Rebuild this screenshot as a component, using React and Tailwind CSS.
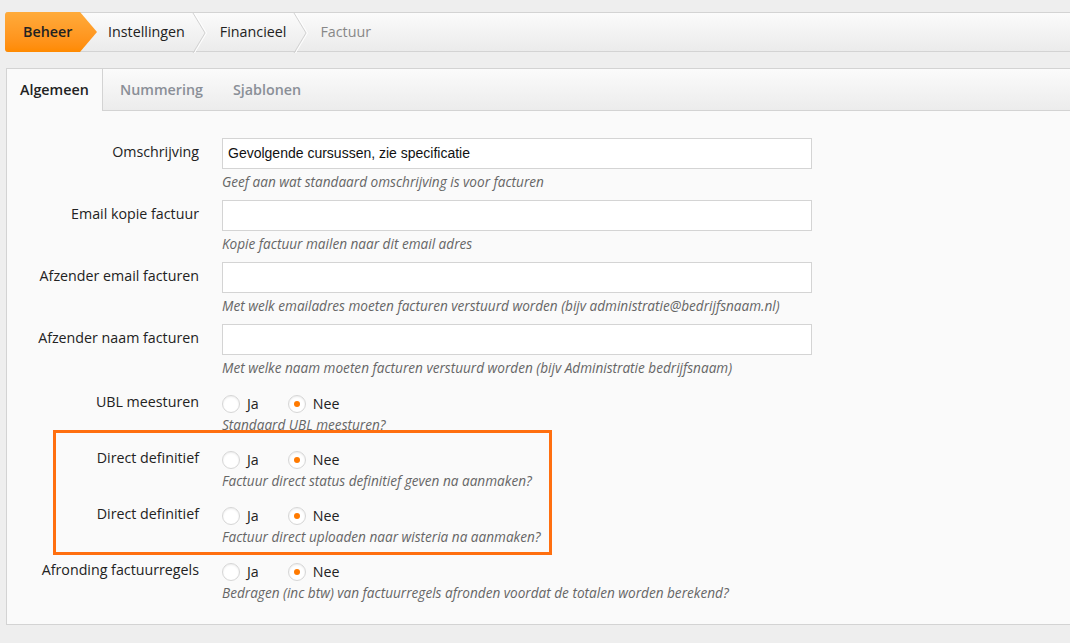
import React from 'react';

const Chevron = () => (
    <svg width="16" height="40" viewBox="0 0 16 40" className="shrink-0 block">
        <polyline points="1,0 13,20 1,40" fill="none" stroke="#d2d2d2" strokeWidth="1" />
        <polyline points="2.5,0 14.5,20 2.5,40" fill="none" stroke="#ffffff" strokeWidth="1" />
    </svg>
);

const Radio = ({ checked, label }) => (
    <label className="flex items-center h-[24px]">
        <span className="w-[18px] h-[18px] rounded-full border border-[#d6d6d6] bg-white shadow-[inset_0_1px_2px_rgba(0,0,0,0.08)] flex items-center justify-center">
            {checked && <span className="w-[6px] h-[6px] rounded-full bg-[#ff7a00]" />}
        </span>
        <span className="ml-[7px] text-[14.25px] text-[#222]">{label}</span>
    </label>
);

const TextRow = ({ label, value, help }) => (
    <div className="flex mb-[9px]">
        <div className="w-[192px] text-right text-[14.25px] leading-[20px] pt-[4px] text-[#222]">{label}</div>
        <div className="ml-[23px]">
            <div className="w-[590px] h-[31px] border border-[#d4d4d4] bg-white px-[5px] flex items-center text-[14px] text-[#111] font-['Liberation_Sans',Arial,sans-serif]">
                {value}
            </div>
            <div className="mt-[4px] text-[13.6px] leading-[18px] italic text-[#666]">{help}</div>
        </div>
    </div>
);

const RadioRow = ({ label, help }) => (
    <div className="flex pt-[6px] mb-[8px]">
        <div className="w-[192px] text-right text-[14.25px] leading-[20px] text-[#222]">{label}</div>
        <div className="ml-[23px]">
            <div className="flex gap-[29px]">
                <Radio label="Ja" />
                <Radio checked label="Nee" />
            </div>
            <div className="text-[13.6px] leading-[18px] italic text-[#666]">{help}</div>
        </div>
    </div>
);

export default function App() {
    return (
        <div className="min-h-[643px] bg-[#eeeeee] pl-[6px] pt-[12px] font-['Open_Sans',sans-serif] overflow-hidden">
            {/* breadcrumb */}
            <div className="h-[40px] flex items-stretch border-y border-[#d3d3d3] bg-gradient-to-b from-[#fbfbfb] to-[#ebebeb] text-[14.3px]">
                <div className="w-[92px] -my-px -ml-px flex items-center pl-[18px] font-semibold text-[#222] rounded-l-[3px] bg-gradient-to-b from-[#ffab3a] to-[#ff8a00] [clip-path:polygon(0_0,calc(100%-17px)_0,100%_50%,calc(100%-17px)_100%,0_100%)]">
                    Beheer
                </div>
                <div className="flex items-center pl-[11px] pr-[7px] text-[#222]">Instellingen</div>
                <Chevron />
                <div className="flex items-center pl-[12px] pr-[7px] text-[#222]">Financieel</div>
                <Chevron />
                <div className="flex items-center pl-[11px] text-[#888]">Factuur</div>
            </div>

            {/* panel */}
            <div className="mt-[16px] border border-[#d3d3d3] border-r-0 bg-[#fafafa] h-[557px]">
                <div className="h-[42px] flex bg-gradient-to-b from-[#fbfbfb] to-[#ececec] border-b border-[#d3d3d3] text-[14.3px] font-semibold">
                    <div className="w-[96px] -mb-px bg-[#fafafa] border-r border-[#d3d3d3] flex items-center pl-[13px] text-[#222]">Algemeen</div>
                    <div className="flex items-center pl-[17px] text-[#8a8f97]">Nummering</div>
                    <div className="flex items-center pl-[30px] text-[#8a8f97]">Sjablonen</div>
                </div>

                <div className="relative pt-[27px]">
                    <TextRow label="Omschrijving" value="Gevolgende cursussen, zie specificatie" help="Geef aan wat standaard omschrijving is voor facturen" />
                    <TextRow label="Email kopie factuur" help="Kopie factuur mailen naar dit email adres" />
                    <TextRow label="Afzender email facturen" help="Met welk emailadres moeten facturen verstuurd worden (bijv administratie@bedrijfsnaam.nl)" />
                    <TextRow label="Afzender naam facturen" help="Met welke naam moeten facturen verstuurd worden (bijv Administratie bedrijfsnaam)" />
                    <RadioRow label="UBL meesturen" help="Standaard UBL meesturen?" />
                    <RadioRow label="Direct definitief" help="Factuur direct status definitief geven na aanmaken?" />
                    <RadioRow label="Direct definitief" help="Factuur direct uploaden naar wisteria na aanmaken?" />
                    <RadioRow label="Afronding factuurregels" help="Bedragen (inc btw) van factuurregels afronden voordat de totalen worden berekend?" />

                    {/* annotation */}
                    <div className="absolute left-[46px] top-[319px] w-[499px] h-[125px] border-[3px] border-[#ff6f0f] pointer-events-none" />
                </div>
            </div>
        </div>
    );
}
